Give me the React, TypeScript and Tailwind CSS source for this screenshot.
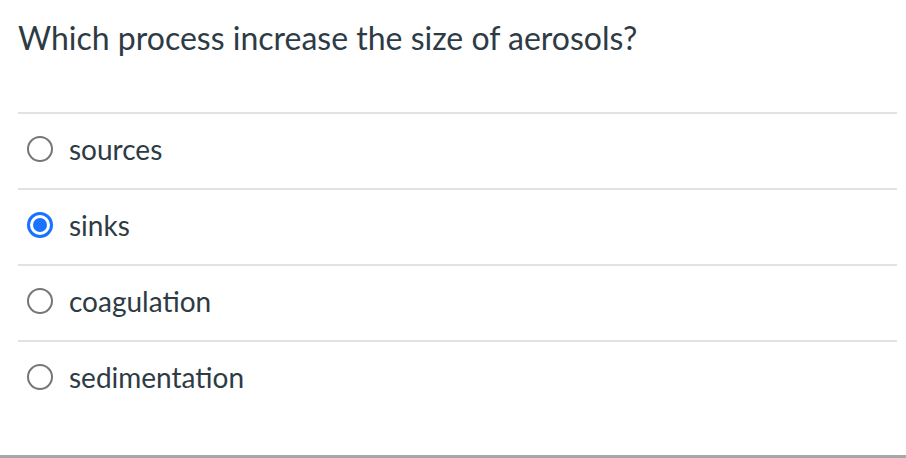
const options = [
  { label: 'sources', checked: false },
  { label: 'sinks', checked: true },
  { label: 'coagulation', checked: false },
  { label: 'sedimentation', checked: false },
]

function Radio({ checked }: { checked: boolean }) {
  if (checked) {
    return (
      <span className="flex h-[26px] w-[26px] shrink-0 items-center justify-center rounded-full border-[3px] border-[#1a73ff] bg-white">
        <span className="h-[14px] w-[14px] rounded-full bg-[#1a73ff]" />
      </span>
    )
  }
  return <span className="h-[26px] w-[26px] shrink-0 rounded-full border-2 border-[#767676] bg-white" />
}

export default function App() {
  return (
    <div className="flex h-[458px] w-[906px] flex-col bg-white text-[#2d3b45]" style={{ fontFamily: 'Lato, "Noto Sans", sans-serif' }}>
      <div className="flex-1 pl-[18px] pr-[9px]">
        <h2 className="pt-[18px] pb-[54px] text-[32px] leading-[40px] font-normal">
          Which process increase the size of aerosols?
        </h2>
        <div>
          {options.map((o) => (
            <label key={o.label} className="flex h-[76px] items-center gap-[16px] border-t-2 border-[#e2e2e2] pb-[4px] pl-[9px]">
              <Radio checked={o.checked} />
              <span className="text-[28px] leading-none">{o.label}</span>
            </label>
          ))}
        </div>
      </div>
      <div className="h-[3px] w-full bg-[#a8a8a8]" />
    </div>
  )
}
